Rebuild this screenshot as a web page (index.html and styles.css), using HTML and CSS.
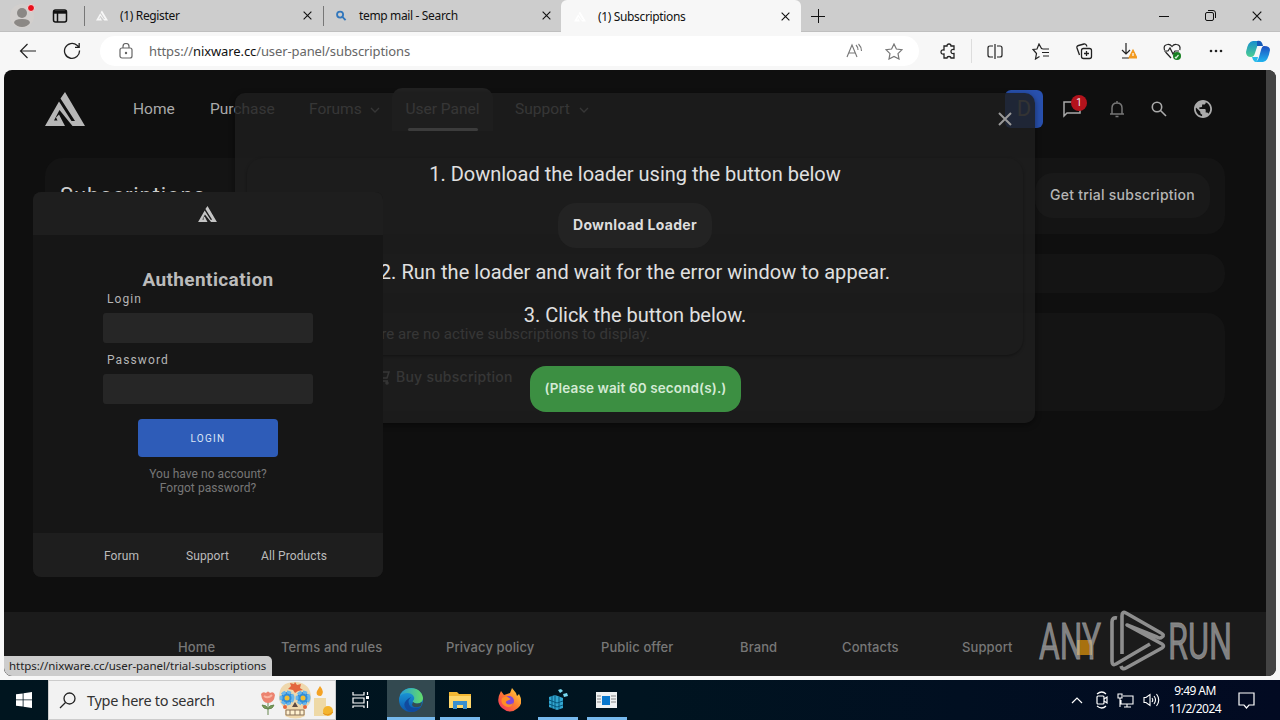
FILE: index.html
```html
<!DOCTYPE html>
<html lang="en">
  <head>
    <meta charset="UTF-8" />
    <title>Subscriptions</title>
    <link rel="stylesheet" href="styles.css">
  </head>
  <body>
    <svg class="defs" width="0" height="0">
      <symbol id="logo" viewBox="0 0 40 34">
        <path d="M20 0 40 34H27.500L14.500 18 9 28.500H12.500L11 25.500 14 22.500 20 34H0L14 9.500 26.500 29H30L15.500 6.500Z" />
      </symbol>
      <symbol id="close" viewBox="0 0 10 10">
        <path d="M.7.700 9.300 9.300M9.300.7.700 9.300" fill="none" stroke="currentColor" stroke-width="1.200" />
      </symbol>
      <symbol id="down" viewBox="0 0 10 6">
        <path d="m1 1 4 4 4-4" fill="none" stroke="currentColor" stroke-width="1.300" />
      </symbol>
    </svg>

    <!-- tab strip -->
    <div class="tabs">
      <div class="profile">
        <svg width="28" height="28" viewBox="0 0 28 28"><circle cx="14" cy="14" r="12" fill="#d2cfcd"/><circle cx="14" cy="11" r="5" fill="#8b8885"/><path d="M6 21q0-4 8-4t8 4q-3 4-8 4t-8-4" fill="#8b8885"/><circle cx="23" cy="6" r="3.500" fill="#e8101c" stroke="#f3dcdc"/></svg>
      </div>
      <div class="workspaces">
        <svg width="16" height="16" fill="none" stroke="#111" stroke-width="1.500"><rect x="1.500" y="2" width="13" height="12" rx="2"/><path d="M2 4.200h12" stroke-width="3"/><path d="M5.500 5v9"/></svg>
      </div>
      <div class="tab first">
        <svg class="favicon" fill="#f7f7f7"><use href="#logo"/></svg>
        <span>(1) Register</span>
        <svg class="x"><use href="#close"/></svg>
      </div>
      <div class="tab second">
        <svg class="favicon" viewBox="0 0 12 12" fill="none" stroke="#3277bc" stroke-width="2"><circle cx="5" cy="5" r="3.300"/><path d="m7.500 7.500 3.500 3.500"/></svg>
        <span>temp mail - Search</span>
        <svg class="x"><use href="#close"/></svg>
      </div>
      <div class="tab active">
        <svg class="favicon" fill="#fff"><use href="#logo"/></svg>
        <span>(1) Subscriptions</span>
        <svg class="x"><use href="#close"/></svg>
      </div>
      <svg class="plus" width="14" height="14" stroke="#111"><path d="M7.500 0v14M0 7.500h14"/></svg>
      <div class="window-buttons">
        <svg width="10" height="10" stroke="#111"><path d="M0 5.500h10"/></svg>
        <svg width="11" height="11" fill="none" stroke="#111"><rect x=".5" y="2.500" width="8" height="8" rx="1.500"/><path d="M3 .5h5q2.500 0 2.500 2.500v5"/></svg>
        <svg width="10" height="10"><use href="#close"/></svg>
      </div>
    </div>

    <!-- address bar -->
    <div class="toolbar">
      <svg width="18" height="16" fill="none" stroke="#222" stroke-width="1.200"><path d="M8.500 1 1.500 8l7 7M1.500 8H17"/></svg>
      <svg width="18" height="18" fill="none" stroke="#222" stroke-width="1.300"><path d="M16.500 8.500a7.500 7.500 0 1 1-2.500-5.200L16 5M16.200 1v4.300H12"/></svg>
      <div class="address">
        <svg width="14" height="16" fill="none" stroke="#666" stroke-width="1.200"><rect x="1" y="5" width="12" height="10" rx="2"/><path d="M4 5V3.500a3 3 0 0 1 6 0V5"/><circle cx="7" cy="10" r=".6" fill="#666"/></svg>
        <span class="url">https://<b>nixware.cc</b>/user-panel/subscriptions</span>
        <svg class="read" width="17" height="16" fill="none" stroke="#777" stroke-width="1.100"><path d="M1 14 6 2l5 12M3 10h6M10 2q2 2 2 5M12.500 1q3 3 3 7"/></svg>
        <svg width="18" height="17" viewBox="0 0 18 17" fill="none" stroke="#777" stroke-width="1.200"><path d="m9 1 2.400 5 5.600.7-4 3.900 1 5.400-5-2.600L4 16l1-5.400L1 6.700 6.600 6Z"/></svg>
      </div>
      <div class="tools">
        <div><svg width="17" height="17" fill="none" stroke="#222" stroke-width="1.300"><path d="M4 3h3q0-2 2-2t2 2h3v3.500q-3-.5-3 2t3 2V15h-3q0-1.500-2-1.500T7 15H4v-4q-3 .5-3-2t3-2Z"/></svg></div>
        <div class="split"><svg width="16" height="15" fill="none" stroke="#222" stroke-width="1.200"><path d="M6 2H3Q1 2 1 4v7q0 2 2 2h3M10 2h3q2 0 2 2v7q0 2-2 2h-3M8 0v15"/></svg></div>
        <div><svg width="17" height="17" fill="none" stroke="#222" stroke-width="1.200"><path d="M11 6 9.500 5.500 7 1 5 6 1 6.500l3.500 4L3.500 16 7.500 13.500M11 6h6M10 9.500h7M11 13h6"/></svg></div>
        <div><svg width="17" height="17" fill="none" stroke="#222" stroke-width="1.300"><rect x="5.500" y="5.500" width="10" height="10" rx="2"/><path d="M3.500 12 1 5q-.5-2 1.500-2.500L8 1q2-.5 3 2.500M10.500 8v5M8 10.500h5"/></svg></div>
        <div><svg width="18" height="18" fill="none" stroke="#222" stroke-width="1.200"><path d="M7 1v11M3 8l4 4 4-4M3 16h7"/><path d="m14 8 4 8h-8Z" fill="#f29a20" stroke="#f29a20"/><path d="M14 11v3" stroke="#fff"/></svg></div>
        <div><svg width="19" height="17" fill="none" stroke="#222" stroke-width="1.200"><path d="M8 15 2.500 9M1.500 7Q0 2 4.500 1.500 7 1 9 3.500q2-2.500 4.500-2Q18 2 16.800 7M1 8h4l2-3 3 6 2-3h4"/><circle cx="14" cy="13" r="4" fill="#178021" stroke="none"/><path d="m12 14 1 1 2.500-3" stroke="#d7f0d9"/></svg></div>
        <div><svg width="14" height="4" fill="#222"><circle cx="2" cy="2" r="1.300"/><circle cx="7" cy="2" r="1.300"/><circle cx="12" cy="2" r="1.300"/></svg></div>
        <div class="copilot">
          <svg width="24" height="23" viewBox="0 0 24 23">
            <defs><linearGradient id="cp1" x2="0" y2="1"><stop stop-color="#178fce"/><stop offset="1" stop-color="#4cce91"/></linearGradient><linearGradient id="cp2" x2="0" y2="1"><stop stop-color="#1c4fc0"/><stop offset="1" stop-color="#21b4ee"/></linearGradient></defs>
            <path d="M7 1h8q-3 1-4 6l-2 6q-1 4-4 4Q0 17 0 12 2 1 7 1" fill="url(#cp1)"/>
            <path d="M11 1q5-1 6 5h-6Z" fill="#155bb9"/>
            <path d="M18 6q6 0 6 4-2 12-7 12H9q3-1 4-5l2-7q1-4 3-4" fill="url(#cp2)"/>
            <path d="M6 17h6q-1 5-3 5-2-1-3-5" fill="#28bde9"/>
          </svg>
        </div>
      </div>
    </div>

    <div class="viewport">
      <div class="page">
        <header>
          <svg class="logo" width="40" height="34" fill="#b7b7b7"><use href="#logo"/></svg>
          <nav>
            <a class="home">Home</a>
            <a class="purchase">Purchase</a>
            <a class="forums">Forums <svg width="10" height="6"><use href="#down"/></svg></a>
            <a class="current">User Panel</a>
            <a>Support <svg width="10" height="6"><use href="#down"/></svg></a>
          </nav>
          <div class="actions">
            <div class="avatar">D</div>
            <div class="chat">
              <svg width="18" height="18" fill="none" stroke="#aaa" stroke-width="1.500"><path d="M1 16V2h16v11H4Z"/></svg>
              <span class="count">1</span>
            </div>
            <svg width="16" height="18" fill="none" stroke="#777" stroke-width="1.500"><path d="M1 14h14M3 14V8q0-5 5-5t5 5v6M8 1v2M6.500 16.500h3"/></svg>
            <svg width="16" height="16" fill="none" stroke="#aaa" stroke-width="1.600"><circle cx="6" cy="6" r="4.700"/><path d="m9.500 9.500 5.500 5.500"/></svg>
            <svg width="18" height="18" viewBox="2 2 20 20" fill="#aaa"><path d="M12 2C6.480 2 2 6.480 2 12s4.480 10 10 10 10-4.480 10-10S17.520 2 12 2zm-1 17.930c-3.950-.49-7-3.850-7-7.930 0-.62.080-1.210.21-1.790L9 15v1c0 1.100.9 2 2 2v1.930zm6.900-2.540c-.26-.81-1-1.390-1.900-1.390h-1v-3c0-.55-.45-1-1-1H8v-2h2c.55 0 1-.45 1-1V7h2c1.100 0 2-.9 2-2v-.41c2.930 1.190 5 4.060 5 7.410 0 2.080-.8 3.970-2.100 5.390z"/></svg>
          </div>
        </header>

        <main>
          <section class="card heading">
            <h1>Subscriptions</h1>
            <a class="button trial">Get trial subscription</a>
          </section>
          <section class="card filter"></section>
          <section class="card list">
            <p>There are no active subscriptions to display.</p>
            <a class="buy">
              <svg width="14" height="16" fill="none" stroke="#aaa" stroke-width="1.500"><path d="M0 2h3l2 7h6l2-6H4M5 9l-1 3h8"/><circle cx="5" cy="14" r="1"/><circle cx="11" cy="14" r="1"/></svg>
              Buy subscription
            </a>
          </section>
        </main>

        <footer>
          <a>Home</a>
          <a>Terms and rules</a>
          <a>Privacy policy</a>
          <a>Public offer</a>
          <a>Brand</a>
          <a>Contacts</a>
          <a>Support</a>
        </footer>
      </div>
      <div class="scrollbar"></div>

      <div class="modal">
        <svg class="modal-close" width="14" height="14" stroke="#999" stroke-width="2"><path d="m1 1 12 12M13 1 1 13"/></svg>
        <div class="steps">
          <p class="step1">1. Download the loader using the button below</p>
          <a class="button download">Download Loader</a>
          <p class="step2">2. Run the loader and wait for the error window to appear.</p>
          <p class="step3">3. Click the button below.</p>
        </div>
        <button class="wait">(Please wait 60 second(s).)</button>
      </div>

      <div class="auth">
        <div class="auth-top"><svg width="19" height="16" fill="#c4c4c4"><use href="#logo"/></svg></div>
        <form>
          <h2>Authentication</h2>
          <label for="login">Login</label>
          <input type="text" id="login" />
          <label for="password">Password</label>
          <input type="password" id="password" />
          <button type="button">LOGIN</button>
          <p>You have no account?<br>Forgot password?</p>
        </form>
        <div class="auth-links">
          <a>Forum</a>
          <a>Support</a>
          <a>All Products</a>
        </div>
      </div>

      <div class="status">https://nixware.cc/user-panel/trial-subscriptions</div>

      <svg class="watermark" width="200" height="66" viewBox="0 0 200 66">
        <rect x="38" y="32" width="15" height="15" fill="#a8710f"/>
        <g fill="#c8c8c8" fill-opacity=".62" stroke="#8e8e8e" stroke-width=".8">
          <text x="0" y="51" textLength="62" lengthAdjust="spacingAndGlyphs">ANY</text>
          <text x="129" y="51" textLength="64" lengthAdjust="spacingAndGlyphs">RUN</text>
        </g>
        <path d="M78 10q-5-1-5 4v39q0 5 4 3l34-20M83 46V8q0-5 4-3l35 20q4 2 1 4-2 2-5 0L88 17l35 19q3 2 0 4L87 60q-4 2-5-2" fill="none" stroke="#8e8e8e" stroke-width="3.600" stroke-linejoin="round"/>
      </svg>
    </div>

    <!-- taskbar -->
    <div class="taskbar">
      <div class="start"><svg width="16" height="16" fill="#fff"><path d="M0 2.300 6.700 1.400V7.500H0ZM7.500 1.300 16 0v7.500H7.500ZM0 8.300h6.700v6.300L0 13.700ZM7.500 8.300H16V16l-8.500-1.300Z"/></svg></div>
      <div class="search">
        <svg width="17" height="17" fill="none" stroke="#222" stroke-width="1.300"><circle cx="10.500" cy="6.500" r="5.500"/><path d="M6.500 10.500 1 16"/></svg>
        <span>Type here to search</span>
        <svg class="doodle" width="76" height="40" viewBox="0 0 76 40">
          <path d="M9 18v17M9 29q-5 0-6-4 5 0 6 4 5 0 6-4-5 0-6 4" fill="#7ba05b" stroke="#66864f"/>
          <path d="M2 14q2-3 5-1 2-3 4 0 4-2 5 2-1 8-7 8t-7-9" fill="#ec8370"/>
          <path d="M5 16q4 3 8-1" stroke="#f9b5a2" stroke-width="2" fill="none"/>
          <path d="M36 2c11 0 16 7 16 15 0 6-2 8-6 11v8q-9 5-20 0v-8q-6-4-6-11Q20 2 36 2" fill="#efd8ad"/>
          <path d="m36 2 2 3 4-1-1 4 3 2-5 1-3 2-2-3-5-1 3-3-1-3 4 1Z" fill="#e4663e"/>
          <circle cx="28" cy="18" r="6" fill="#318dd8" stroke="#68b6eb" stroke-width="3" stroke-dasharray="4 1.500"/>
          <circle cx="44" cy="18" r="6" fill="#318dd8" stroke="#68b6eb" stroke-width="3" stroke-dasharray="4 1.500"/>
          <circle cx="28" cy="18" r="2.500" fill="#f1be32"/><circle cx="44" cy="18" r="2.500" fill="#f1be32"/>
          <path d="m36 22 3 5h-6Z" fill="#5b4942"/><path d="M27 30h18v5H27Z" fill="#fff1d0" stroke="#8b725a"/><path d="M31 30v5M36 30v5M41 30v5" stroke="#8b725a"/>
          <circle cx="26" cy="27" r="2" fill="#e4663e"/><circle cx="46" cy="27" r="2" fill="#e4663e"/>
          <path d="M55 18h12v18H55Z" fill="#eed9a6"/><path d="M61 6q5 6 1 10-6 0-4-5Z" fill="#f4a224"/><circle cx="69" cy="31" r="5" fill="#f3b42e"/><path d="M64 33q4 4 10-1" stroke="#e49019" fill="none"/>
        </svg>
      </div>
      <div class="app task-view"><svg width="18" height="16" fill="none" stroke="#fff" stroke-width="1.200"><path d="M1 0v3h11V0M1 6h11v5H1ZM1 16v-2h11v2M15.500 0v3M15.500 9v7"/><path d="M14 4h3v3h-3Z" fill="#fff" stroke="none"/></svg></div>
      <div class="app open focused">
        <svg width="24" height="24" viewBox="0 0 24 24"><defs><linearGradient id="edge1"><stop stop-color="#259bd8"/><stop offset="1" stop-color="#64dd68"/></linearGradient><linearGradient id="edge2" x2="0" y2="1"><stop stop-color="#1ca4df"/><stop offset="1" stop-color="#0c54ab"/></linearGradient></defs><circle cx="12" cy="12" r="12" fill="url(#edge2)"/><path d="M1 8C4-2 22-3 24 10c0 6-8 7-10 4-1-1 2-2 1-5C13 4 5 4 1 8" fill="url(#edge1)"/><path d="M12 9q-5 5 0 10 5 2 10 0-7 8-14 3-7-7 4-13" fill="#114a9d"/><path d="M14 14q4 3 9 0l-1 4q-7 3-9-1Z" fill="#354b52"/></svg>
      </div>
      <div class="app open"><svg width="22" height="20"><path d="M0 2h8l2 2h12v14H0Z" fill="#f3b833"/><path d="M0 6h22v12H0Z" fill="#ffd76b"/><path d="M4 19v-8h14v8h-4v-4H8v4Z" fill="#3a8fd0"/></svg></div>
      <div class="app">
        <svg width="24" height="24" viewBox="0 0 24 24"><defs><linearGradient id="ff" x1="1" y1="0" x2="0" y2="1"><stop stop-color="#ffe23d"/><stop offset=".5" stop-color="#ff7b30"/><stop offset="1" stop-color="#ef2767"/></linearGradient></defs><path d="m4 3 3 4 6-2 2-5 4 5 1 3 2-2q5 9-1 14-8 7-16 0-7-6-1-17" fill="url(#ff)"/><circle cx="12" cy="13" r="5" fill="#8148d7"/><path d="M5 10q5-3 7 0 3 1 0 2-4 1-3 3 3 3 7 0-2 6-8 3-5-3-3-8" fill="#ff8e26"/></svg>
      </div>
      <div class="app open"><svg width="22" height="24"><path d="m2 9 6-2 8 3v10l-6 2-8-3Z" fill="#32a6cf"/><path d="m2 12 8 3 6-2M2 16l8 3 6-2M5 8v12M8 7v14M12 9v12" stroke="#07567c" fill="none"/><path d="m11 2 3-1 2 2-3 2ZM16 6l4-1 1 3-4 1Z" fill="#78d9f0"/></svg></div>
      <div class="app open"><svg width="22" height="16"><path d="M0 0h21v16H0Z" fill="#eef1f2"/><path d="M6 4h8v9H6Z" fill="#0877cd"/><path d="M1 4h4M1 7h4M1 10h4M15 4h5M15 7h5M15 10h5" stroke="#888"/></svg></div>
      <div class="tray">
        <svg width="12" height="8" fill="none" stroke="#fff" stroke-width="1.200"><path d="m1 7 5-5 5 5"/></svg>
        <svg class="meet" width="14" height="18" fill="none" stroke="#fff" stroke-width="1.200"><rect x="2" y="5" width="7" height="8" rx="1"/><path d="m9 8 3-2v6l-3-2M2 3q5-4 9 0M2 15q5 4 9 0"/></svg>
        <svg width="17" height="15" fill="none" stroke="#fff" stroke-width="1.100"><path d="M6 3h10v8H4V7M7 14h7M10 11v3M1 1h4v4H1ZM3 5v9"/></svg>
        <svg width="17" height="16" fill="none" stroke="#fff" stroke-width="1.100"><path d="M1 5.500h2l4-3v11l-4-3H1ZM9 6q1.500 2 0 4M11 4q3 4 0 8M13.500 2q4.500 6 0 12"/></svg>
        <div class="clock"><span>9:49 AM</span><span>11/2/2024</span></div>
        <svg width="17" height="17" fill="none" stroke="#fff" stroke-width="1.200"><path d="M1 1h15v12h-5l-2.500 3L6 13H1Z"/></svg>
      </div>
    </div>
  </body>
</html>
```

FILE: styles.css
```css
* {
  box-sizing: border-box;
}
body {
  margin: 0;
  width: 1280px;
  height: 720px;
  overflow: hidden;
  display: flex;
  flex-direction: column;
  background: #f7f7f7;
  font-family: Roboto, sans-serif;
}
svg {
  flex: none;
}
.defs {
  position: absolute;
}
h1,
h2,
p {
  margin: 0;
  font-weight: 400;
}

/* browser window */
.tabs {
  height: 32px;
  flex: none;
  display: flex;
  align-items: center;
  background: #cdcdcd;
  border-bottom: 1px solid #bfbfbf;
  font: 12px "Noto Sans", sans-serif;
  letter-spacing: -0.35px;
  color: #111;
}
.profile {
  width: 44px;
  height: 28px;
  padding-left: 8px;
}
.workspaces {
  width: 40px;
  height: 16px;
  padding-left: 8px;
}
.tab {
  height: 31px;
  padding: 0 11px;
  display: flex;
  align-items: center;
}
.first {
  width: 239px;
  height: 20px;
  border-left: 1px solid #777;
}
.second {
  width: 238px;
  height: 20px;
  padding-right: 10px;
  border-left: 1px solid #777;
}
.active {
  width: 240px;
  height: 32px;
  margin-bottom: -1px;
  background: #f7f7f7;
  border-radius: 6px 6px 0 0;
  padding-left: 13px;
}
.tab span {
  flex: 1;
  margin-left: 12px;
}
.active span {
  margin-left: 13px;
}
.favicon {
  width: 12px;
  height: 11px;
}
.active .favicon {
  margin-right: -1px;
}
.x {
  width: 9px;
  height: 9px;
}
.plus {
  margin-left: 10px;
}
.window-buttons {
  margin-left: auto;
  padding-right: 18px;
  display: flex;
  align-items: center;
  gap: 36px;
}
.toolbar {
  height: 38px;
  flex: none;
  display: flex;
  align-items: center;
  padding-left: 19px;
}
.toolbar > svg + svg {
  margin: 0 19px 0 26px;
}
.address {
  width: 819px;
  height: 30px;
  flex: none;
  padding: 0 16px 0 19px;
  display: flex;
  align-items: center;
  background: #fff;
  border-radius: 15px;
}
.url {
  margin-left: 16px;
  font: 13px "Noto Sans", sans-serif;
  letter-spacing: -0.1px;
  color: #666;
}
.url b {
  font-weight: 400;
  color: #111;
}
.read {
  margin: 0 22px 0 auto;
}
.tools {
  display: flex;
  margin-left: 7px;
}
.tools div {
  width: 44px;
  height: 24px;
  flex: none;
  display: flex;
  align-items: center;
  justify-content: center;
}
.tools .split {
  width: 47px;
  border-left: 1px solid #ddd;
  margin-left: 1px;
}
.tools .copilot {
  width: 40px;
}
.viewport {
  position: relative;
  height: 606px;
  flex: none;
  margin: 0 4px;
  display: flex;
  border-radius: 8px;
  overflow: hidden;
  background: #0f0f0f;
  color: #aaa;
}
.page {
  flex: 1;
  display: flex;
  flex-direction: column;
}
.scrollbar {
  width: 10px;
  background: #444;
}

/* site header */
header {
  height: 88px;
  flex: none;
  display: flex;
  padding: 18px 0 0 41px;
}
.logo {
  margin-top: 4px;
}
nav {
  flex: 1;
  display: flex;
  align-items: center;
  height: 42px;
  margin-left: 48px;
  font-size: 15.5px;
  line-height: 43px;
}
nav svg {
  margin-left: 5px;
  vertical-align: 1px;
}
.home {
  width: 77px;
}
.purchase {
  width: 99px;
}
.forums {
  width: 83px;
}
.current {
  width: 101px;
  height: 43px;
  margin-right: 22px;
  text-align: center;
  background: #222;
  border-radius: 10px 10px 0 0;
  position: relative;
}
.current::after {
  content: "";
  position: absolute;
  left: 16px;
  bottom: 0;
  width: 70px;
  height: 3px;
  border-radius: 2px;
  background: #ccc;
}
.actions {
  display: flex;
  align-items: center;
  height: 38px;
  margin-top: 2px;
  padding-right: 54px;
  gap: 27px;
}
.avatar {
  width: 38px;
  height: 38px;
  margin-right: -7px;
  border-radius: 6px;
  background: #2850ad;
  color: #999;
  font-size: 22px;
  line-height: 37px;
  text-align: center;
}
.chat {
  position: relative;
  height: 18px;
  margin-right: 1px;
}
.chat + svg {
  margin-right: -1px;
}
.count {
  position: absolute;
  top: -5px;
  left: 8px;
  width: 16px;
  height: 16px;
  border-radius: 8px;
  background: #b3131c;
  color: #eee;
  font-size: 10px;
  line-height: 16px;
  text-align: center;
}

/* site content */
main {
  flex: 1;
  display: flex;
  flex-direction: column;
  gap: 20px;
  padding: 0 41px;
}
.card {
  background: #141414;
  border-radius: 18px;
}
.heading {
  height: 76px;
  padding: 15px;
  display: flex;
  justify-content: space-between;
}
h1 {
  font-size: 22px;
  letter-spacing: 0.9px;
  line-height: 45px;
  color: #ccc;
}
.button {
  height: 45px;
  line-height: 44px;
  text-align: center;
  border-radius: 18px;
  font-family: Inter, sans-serif;
  font-weight: 500;
  font-size: 14px;
}
.trial {
  width: 175px;
  background: #191919;
  color: #b5b5b5;
  font-size: 14px;
  letter-spacing: 0.25px;
}
.filter {
  height: 39px;
}
.list {
  height: 98px;
  padding: 11px 0 0 311px;
}
.list p {
  font-size: 15px;
  line-height: 20px;
  letter-spacing: 0.05px;
}
.buy {
  display: flex;
  align-items: center;
  gap: 6px;
  margin: 23px 0 0 20px;
  font: 500 14px/19px Inter, sans-serif;
  letter-spacing: 0.25px;
}
footer {
  height: 64px;
  background: #1b1b1b;
  display: grid;
  grid-template-columns: 38px 100px 90px 74px 37px 55px 50px;
  gap: 65px;
  padding: 26px 0 0 174px;
  font: 500 13px/19px Inter, sans-serif;
  letter-spacing: 0.1px;
  color: #777;
  white-space: nowrap;
}

/* loader instructions */
.modal {
  position: absolute;
  left: 231px;
  top: 23px;
  width: 800px;
  height: 330px;
  padding: 65px 12px 0;
  display: flex;
  flex-direction: column;
  align-items: center;
  background: rgba(30, 30, 30, 0.83);
  border-radius: 10px;
  box-shadow: 0 2px 6px rgba(0, 0, 0, 0.45);
}
.modal-close {
  position: absolute;
  right: 23px;
  top: 19px;
}
.steps {
  width: 776px;
  height: 197px;
  padding-top: 4px;
  display: flex;
  flex-direction: column;
  align-items: center;
  border-radius: 16px;
  box-shadow: 0 1px 3px rgba(0, 0, 0, 0.35);
  font-size: 20px;
  line-height: 24px;
  color: #e0e0e0;
}
.step2 {
  letter-spacing: 0.05px;
}
.download {
  width: 154px;
  margin: 17px 0 12px;
  background: #232323;
  color: #ddd;
  font-weight: 700;
  letter-spacing: 0.3px;
}
.step3 {
  margin-top: 19px;
}
.wait {
  width: 211px;
  height: 46px;
  margin-top: 11px;
  padding: 0 0 2px 1px;
  border: none;
  border-radius: 16px;
  background: #3c8f42;
  color: #d4ead5;
  font: 600 13.5px Inter, sans-serif;
  letter-spacing: 0.12px;
}

/* login window */
.auth {
  position: absolute;
  left: 29px;
  top: 122px;
  width: 350px;
  height: 385px;
  display: flex;
  flex-direction: column;
  background: #161616;
  border-radius: 8px;
  overflow: hidden;
}
.auth-top {
  height: 43px;
  padding: 14px 2px 0 0;
  text-align: center;
  background: #1e1e1e;
}
form {
  flex: 1;
  display: flex;
  flex-direction: column;
  align-items: center;
  padding-top: 34px;
}
h2 {
  font-size: 19px;
  font-weight: 700;
  letter-spacing: 0.4px;
  line-height: 22px;
  color: #bbb;
}
label {
  width: 202px;
  height: 16px;
  font-size: 12px;
  line-height: 16px;
  letter-spacing: 1.1px;
  color: #b5b5b5;
}
input {
  width: 210px;
  height: 30px;
  margin: 6px 0 9px;
  border: none;
  border-radius: 3px;
  background: #262626;
}
form button {
  width: 140px;
  height: 38px;
  margin-top: 6px;
  border: none;
  border-radius: 4px;
  background: #2e5cb8;
  color: #dce5f5;
  font: 10px Roboto, sans-serif;
  letter-spacing: 1.3px;
}
form p {
  margin-top: 10px;
  font-size: 12px;
  line-height: 14px;
  letter-spacing: 0.05px;
  text-align: center;
  color: #777;
}
.auth-links {
  height: 44px;
  background: #1e1e1e;
  display: grid;
  grid-template-columns: 82px 75px 80px;
  padding-left: 71px;
  font-size: 12px;
  line-height: 46px;
  letter-spacing: 0.1px;
  color: #bbb;
}
.status {
  position: absolute;
  left: 0;
  bottom: 0;
  width: 268px;
  height: 20px;
  padding-left: 5px;
  background: #cdcdcd;
  border-radius: 0 5px 0 0;
  color: #222;
  font: 11.5px/20px "Noto Sans", sans-serif;
  letter-spacing: -0.05px;
  white-space: nowrap;
}
.watermark {
  position: absolute;
  right: 37px;
  bottom: 2px;
  font: 50px Roboto, sans-serif;
  overflow: visible;
}

/* windows taskbar */
.taskbar {
  height: 40px;
  flex: none;
  margin-top: 4px;
  display: flex;
  background: linear-gradient(90deg, #00151f, #001420 50%, #020a22);
}
.start,
.app {
  width: 49px;
  display: flex;
  align-items: center;
  justify-content: center;
}
.start {
  width: 48px;
}
.search {
  width: 288px;
  height: 40px;
  padding-left: 10px;
  display: flex;
  align-items: center;
  background: #f2f2f2;
  border: 1px solid #ccc;
  font: 14.5px "Noto Sans", sans-serif;
  letter-spacing: -0.3px;
  color: #333;
}
.search span {
  margin-left: 11px;
}
.doodle {
  margin-left: auto;
}
.task-view {
  width: 51px;
  padding-right: 2px;
}
.open {
  background: linear-gradient(#76b9ed, #76b9ed) center bottom / 40px 3px no-repeat;
}
.focused {
  width: 48px;
  background-color: #334950;
  background-size: 48px 3px;
}
.tray {
  margin-left: auto;
  padding-right: 25px;
  display: flex;
  align-items: center;
  gap: 9px;
}
.meet {
  margin: 0 -1px 0 3px;
}
.clock {
  width: 54px;
  display: flex;
  flex-direction: column;
  align-items: center;
  margin: 0 7px 0 -1px;
  color: #fff;
  font: 12px/18px "Noto Sans", sans-serif;
  letter-spacing: -0.55px;
}
```
